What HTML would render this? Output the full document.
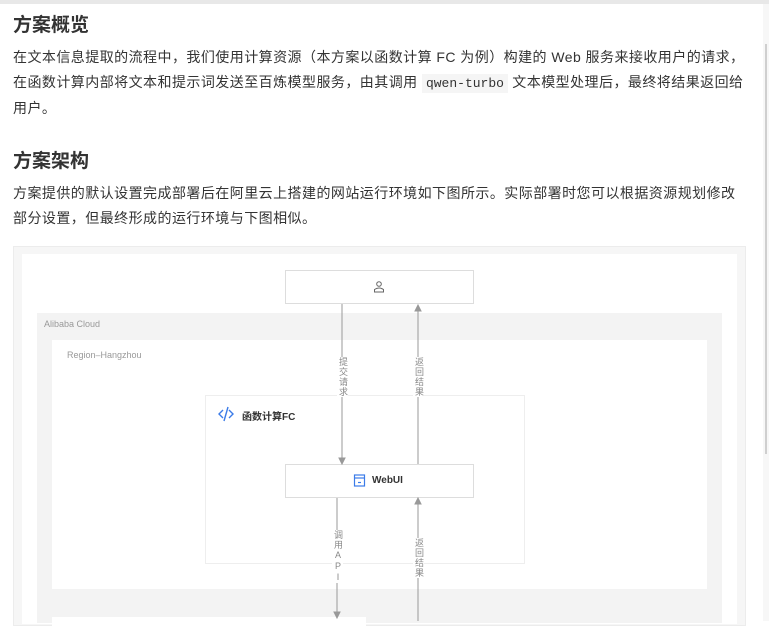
<!DOCTYPE html>
<html><head><meta charset="utf-8"><style>
*{margin:0;padding:0;box-sizing:border-box}
body{width:769px;height:621px;overflow:hidden;background:#fff;font-family:"Liberation Sans","Noto Sans CJK SC",sans-serif;color:#333;position:relative}
.topbar{position:absolute;left:0;top:0;width:769px;height:4px;background:#e8e8e8}
.sb{position:absolute;right:0;top:4px;width:6px;height:617px;background:#f7f7f7}
.sb i{position:absolute;left:2px;top:40px;width:2px;height:410px;background:#cfcfcf}
h2{position:absolute;left:13px;font-size:19px;font-weight:bold;color:#333}
p{position:absolute;left:13px;width:732px;font-size:14px;line-height:24.5px;color:#333;letter-spacing:0.45px}
code{font-family:"Liberation Mono",monospace;font-size:13px;background:#f5f5f5;padding:2px 4px;letter-spacing:0}
.a{position:absolute}
.lbl{position:absolute;font-size:9px;color:#888;writing-mode:vertical-rl;text-orientation:upright;background:#fff;letter-spacing:1px;line-height:11px;width:11px}
</style></head><body>
<div class="topbar"></div>
<div class="sb"><i></i></div>
<h2 style="top:10px">方案概览</h2>
<p style="top:45px">在文本信息提取的流程中，我们使用计算资源（本方案以函数计算 FC 为例）构建的 Web 服务来接收用户的请求，在函数计算内部将文本和提示词发送至百炼模型服务，由其调用 <code>qwen-turbo</code> 文本模型处理后，最终将结果返回给用户。</p>
<h2 style="top:146px">方案架构</h2>
<p style="top:181px">方案提供的默认设置完成部署后在阿里云上搭建的网站运行环境如下图所示。实际部署时您可以根据资源规划修改部分设置，但最终形成的运行环境与下图相似。</p>

<div class="a" style="left:13px;top:246px;width:733px;height:380px;border:1px solid #ececec;background:#f6f6f6"></div>
<div class="a" style="left:22px;top:254px;width:715px;height:370px;background:#fff"></div>
<div class="a" style="left:37px;top:313px;width:685px;height:310px;background:#f3f3f3"></div>
<div class="a" style="left:44px;top:319px;font-size:9px;color:#999">Alibaba Cloud</div>
<div class="a" style="left:52px;top:340px;width:655px;height:249px;background:#fff"></div>
<div class="a" style="left:67px;top:350px;font-size:9px;color:#999">Region–Hangzhou</div>
<div class="a" style="left:52px;top:617px;width:314px;height:10px;background:#fff"></div>
<div class="a" style="left:205px;top:395px;width:320px;height:169px;border:1px solid #eee;background:#fff"></div>
<div class="a" style="left:242px;top:408px;font-size:10px;font-weight:bold;color:#333">函数计算FC</div>
<svg class="a" style="left:217px;top:405px" width="18" height="18" viewBox="0 0 18 18" fill="none" stroke="#3b7be8" stroke-width="1.4"><path d="M6 5 L2 9 L6 13"/><path d="M12 5 L16 9 L12 13"/><path d="M11 2 L7 16"/></svg>

<div class="a" style="left:285px;top:270px;width:189px;height:34px;border:1px solid #ddd;background:#fff"></div>
<svg class="a" style="left:372px;top:280px" width="14" height="14" viewBox="0 0 14 14" fill="none" stroke="#666" stroke-width="1"><circle cx="7" cy="4" r="2.3"/><path d="M2.5 12 V9.5 Q7 6.5 11.5 9.5 V12 Z"/></svg>

<div class="a" style="left:285px;top:464px;width:189px;height:34px;border:1px solid #ddd;background:#fff"></div>
<svg class="a" style="left:353px;top:474px" width="13" height="13" viewBox="0 0 13 13" fill="none" stroke="#3b7be8" stroke-width="1.2"><rect x="1.5" y="1" width="10" height="11"/><path d="M1.5 4 H11.5"/><path d="M5 8.5 H8"/></svg>
<div class="a" style="left:372px;top:475px;font-size:10px;font-weight:bold;color:#333">WebUI</div>

<svg class="a" style="left:0;top:0" width="769" height="621">
<g stroke="#999" stroke-width="1" fill="#999">
<line x1="342" y1="304" x2="342" y2="458"/><path d="M339 458 L345 458 L342 464 Z"/>
<line x1="418" y1="310" x2="418" y2="464"/><path d="M415 311 L421 311 L418 305 Z"/>
<line x1="337" y1="498" x2="337" y2="612"/><path d="M334 612 L340 612 L337 618 Z"/>
<line x1="418" y1="503" x2="418" y2="621"/><path d="M415 504 L421 504 L418 498 Z"/>
</g></svg>
<div class="lbl" style="left:337px;top:357px">提交请求</div>
<div class="lbl" style="left:413px;top:357px">返回结果</div>
<div class="lbl" style="left:332px;top:530px">调用API</div>
<div class="lbl" style="left:413px;top:538px">返回结果</div>
</body></html>
